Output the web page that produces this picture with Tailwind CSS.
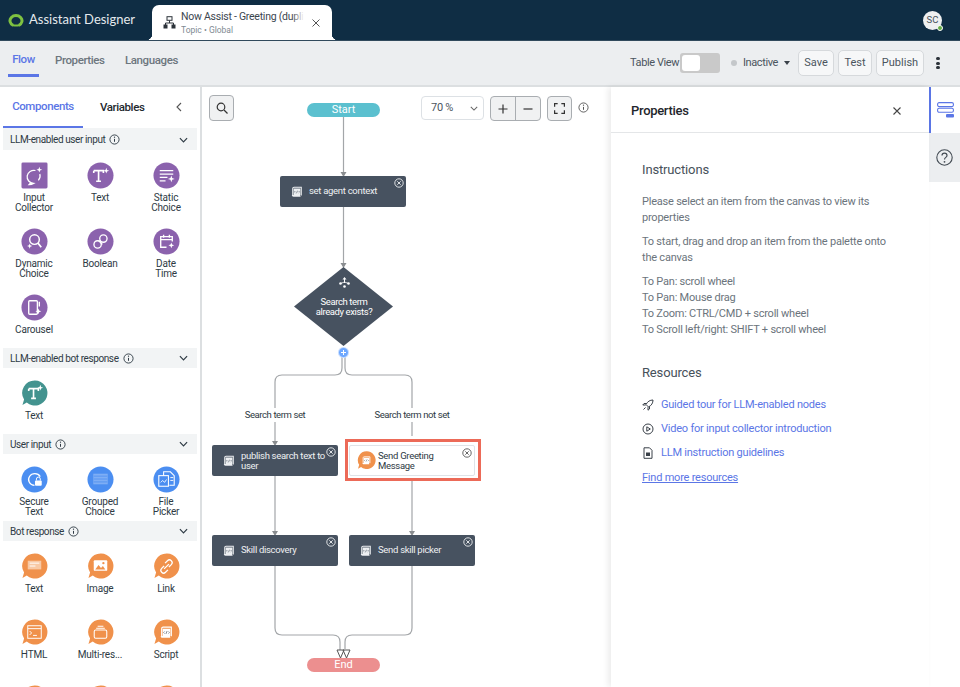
<!DOCTYPE html>
<html lang="en">
<head>
    <meta charset="UTF-8">
    <title>Assistant Designer</title>
    <script src="https://cdn.jsdelivr.net/npm/@tailwindcss/browser@4"></script>
</head>
<body class="w-[960px] h-[687px] overflow-hidden bg-white text-[#2e3a44] [font-family:Roboto,sans-serif]">
    <!-- shared icons -->
    <svg class="hidden">
        <symbol id="script-glyph" viewBox="0 0 14 14">
            <path d="M3.500 1.500h8.500v9.500M3.500 1.500c-1 0-1.500.7-1.500 1.500v7.500" fill="none" stroke="currentColor" stroke-width="1.200"/>
            <path d="M3 3h8v8H3zM1 10.500h9.500c0 1.400.6 2 1.200 2H3c-1.200 0-2-.8-2-2z" fill="currentColor"/>
            <path d="M5 6 4 7l1 1M9 6l1 1-1 1M7.600 5.500 6.400 8.500" fill="none" stroke="#475260" stroke-width=".7"/>
        </symbol>
        <symbol id="bubble" viewBox="0 0 28 28">
            <path d="M14.500.5a13 13 0 1 1-8.500 22.900L1.500 26l1.700-5.700A13 13 0 0 1 14.500.5z" fill="currentColor"/>
        </symbol>
        <symbol id="close-circle" viewBox="0 0 10 10">
            <circle cx="5" cy="5" r="4.200" fill="none" stroke="currentColor" stroke-width=".9"/>
            <path d="M3.300 3.300l3.400 3.400M6.700 3.300 3.300 6.700" stroke="currentColor" stroke-width=".9"/>
        </symbol>
        <symbol id="info" viewBox="0 0 12 12">
            <circle cx="6" cy="6" r="5" fill="none" stroke="currentColor" stroke-width="1"/>
            <path d="M6 5.300v3.200" stroke="currentColor" stroke-width="1.100"/>
            <circle cx="6" cy="3.500" r=".7" fill="currentColor"/>
        </symbol>
        <symbol id="chevron" viewBox="0 0 10 6">
            <path d="M1 1l4 4 4-4" fill="none" stroke="currentColor" stroke-width="1.300"/>
        </symbol>
    </svg>

    <!-- top header -->
    <header class="h-[41px] bg-[#0f2d44] flex items-end relative border-b border-[#31495c]">
        <div class="flex items-center h-[40px] pl-[8px] w-[152px] self-start">
            <svg class="w-[16px] h-[13px]" viewBox="0 0 16 13"><path d="M5.200 11.300a6 5.200 0 1 1 5.600 0" fill="none" stroke="#7fc241" stroke-width="3"/><path d="M5 11.300q3 .6 6 0" fill="none" stroke="#7fc241" stroke-width="2"/></svg>
            <span class="ml-[5px] text-[13px] text-[#e4e9ed] whitespace-nowrap [font-family:Lato,sans-serif]">Assistant Designer</span>
        </div>
        <div class="relative w-[180px] h-[35px] bg-white rounded-t-[7px] flex items-center pl-[11px]">
            <div class="absolute left-[-6px] bottom-0 w-[6px] h-[6px] bg-[radial-gradient(circle_at_0_0,transparent_6px,white_6.500px)]"></div>
            <div class="absolute right-[-6px] bottom-0 w-[6px] h-[6px] bg-[radial-gradient(circle_at_100%_0,transparent_6px,white_6.500px)]"></div>
            <svg class="w-[13px] h-[13px] text-[#2c333a]" viewBox="0 0 13 13"><rect x="4" y=".7" width="5" height="3.600" fill="none" stroke="currentColor"/><path d="M6.500 4.500v2.500M2.500 9V7h8v2" fill="none" stroke="currentColor"/><rect x=".5" y="8.500" width="4" height="4" fill="currentColor"/><rect x="8.500" y="8.500" width="4" height="4" fill="currentColor"/></svg>
            <div class="relative ml-[5px] w-[123px] h-[25px] overflow-hidden">
                <div class="text-[10.500px] leading-[14px] tracking-[-0.25px] text-[#3c464f] whitespace-nowrap">Now Assist - Greeting (dupli</div>
                <div class="text-[8.500px] leading-[10px] mt-[1px] text-[#808a93] whitespace-nowrap">Topic • Global</div>
                <div class="absolute right-0 top-0 w-[12px] h-[13px] bg-gradient-to-r from-transparent to-white"></div>
            </div>
            <svg class="ml-[8px] w-[8px] h-[8px] text-[#555]" viewBox="0 0 8 8"><path d="M.5.500l7 7M7.500.500l-7 7" stroke="currentColor"/></svg>
        </div>
        <div class="relative ml-auto mr-[18px] self-center w-[19px] h-[19px] rounded-full bg-[#eef0f1] flex items-center justify-center text-[9.500px] text-[#47525c]">
            SC
            <span class="absolute right-[-1px] bottom-[-1px] w-[6px] h-[6px] rounded-full bg-[#62ad45] border border-white"></span>
        </div>
    </header>

    <!-- toolbar -->
    <div class="h-[46px] bg-[#eceef0] border-b-2 border-[#dcdfe1] flex items-center relative">
        <nav class="flex h-full pl-[8px] text-[11.500px] tracking-[-0.4px] font-medium text-[#6c767e]">
            <div class="w-[31px] flex items-center justify-center text-[#5b76e6] border-b-[3px] border-[#5b76e6] h-[36px] pt-[4px]">Flow</div>
            <div class="ml-[16px] w-[50px] h-[36px] flex items-center pt-[4px]">Properties</div>
            <div class="ml-[20px] h-[36px] flex items-center pt-[4px]">Languages</div>
        </nav>
        <div class="ml-auto flex items-center text-[11px] text-[#4b555e] whitespace-nowrap">
            <span class="w-[46px] pt-[1px] tracking-[-0.4px]">Table View</span>
            <div class="ml-[4px] w-[40px] h-[20px] rounded-[3px] bg-[#c9c9c9] p-[2px]"><div class="w-[18px] h-[16px] bg-white rounded-[3px]"></div></div>
            <span class="ml-[11px] w-[6px] h-[6px] rounded-full bg-[#c4c7ca]"></span>
            <span class="ml-[6px] w-[34px] pt-[1px] tracking-[-0.4px]">Inactive</span>
            <span class="ml-[7px] w-0 h-0 border-x-[3.500px] border-x-transparent border-t-[4px] border-t-[#3a4149]"></span>
            <button class="ml-[8px] w-[36px] h-[26px] pt-[1px] bg-[#f6f7f8] border border-[#d6d9dc] rounded-[5px]">Save</button>
            <button class="ml-[4px] w-[34px] h-[26px] pt-[1px] bg-[#f6f7f8] border border-[#d6d9dc] rounded-[5px]">Test</button>
            <button class="ml-[4px] w-[48px] h-[26px] pt-[1px] bg-[#f6f7f8] border border-[#d6d9dc] rounded-[5px]">Publish</button>
            <div class="ml-[12px] mr-[20px] flex flex-col gap-[1.500px]">
                <span class="w-[4px] h-[3px] rounded-full bg-[#2c333a]"></span>
                <span class="w-[4px] h-[3px] rounded-full bg-[#2c333a]"></span>
                <span class="w-[4px] h-[3px] rounded-full bg-[#2c333a]"></span>
            </div>
        </div>
    </div>

    <main class="flex h-[600px]">
        <!-- component palette -->
        <aside class="w-[202px] shrink-0 border-r-2 border-[#dcdfe1] overflow-hidden">
            <div class="h-[41px] flex items-center relative text-[11.500px] font-medium tracking-[-0.4px]">
                <div class="ml-[3px] w-[80px] h-full flex items-center justify-center text-[#5b76e6] border-b-[2px] border-[#5b76e6] pt-[1px]">Components</div>
                <div class="ml-[17px] text-[#23292f]">Variables</div>
                <svg class="absolute left-[176px] top-[15px] w-[6px] h-[10px] text-[#555]" viewBox="0 0 6 10"><path d="M5 1 1 5l4 4" fill="none" stroke="currentColor" stroke-width="1.100"/></svg>
            </div>

            <div class="mx-[3px] h-[22px] pt-[1px] bg-[#f2f4f5] flex items-center pl-[7px] pr-[9px] text-[10px] tracking-[-0.4px]">
                LLM-enabled user input
                <svg class="ml-[4px] w-[11px] h-[11px]"><use href="#info"/></svg>
                <svg class="ml-auto w-[9px] h-[6px]"><use href="#chevron"/></svg>
            </div>
            <div class="h-[198px] pt-[12px] px-[1px] grid grid-cols-[repeat(3,66px)] auto-rows-[55px] gap-y-[11px] text-[10px] tracking-[-0.2px] leading-[10px] text-center">
                <div class="flex flex-col items-center">
                    <svg class="w-[27px] h-[27px]" viewBox="0 0 28 28"><rect x=".5" y=".5" width="27" height="27" rx="1.500" fill="#8b62ad"/><path d="M15 8.800a7 6.800 0 1 0-2 13.400c-1.200.7-3 1.200-4.500 1.200.8-.8 1.200-1.700 1.300-2.600M19.500 12.500a7 6.800 0 0 1-1.500 6.500" fill="none" stroke="#fff" stroke-width="1.300"/><path d="M19 5l.8 2.200L22 8l-2.200.8L19 11l-.8-2.200L16 8l2.200-.8z" fill="#fff"/></svg>
                    <span class="mt-[4px]">Input<br>Collector</span>
                </div>
                <div class="flex flex-col items-center">
                    <svg class="w-[27px] h-[27px]" viewBox="0 0 28 28"><circle cx="14" cy="14" r="13.500" fill="#8b62ad"/><path d="M7 9h10v2.500M7 11.500V9M12 9v11M9.500 20h5" fill="none" stroke="#fff" stroke-width="1.700"/><path d="M20 6l.8 2.200L23 9l-2.200.8L20 12l-.8-2.200L17 9l2.200-.8z" fill="#fff"/></svg>
                    <span class="mt-[4px]">Text</span>
                </div>
                <div class="flex flex-col items-center">
                    <svg class="w-[27px] h-[27px]" viewBox="0 0 28 28"><circle cx="14" cy="14" r="13.500" fill="#8b62ad"/><path d="M7 9h14M7 12.500h14M7 16h8M7 19.500h6" stroke="#fff" stroke-width="1.200" fill="none"/><path d="M19 14l.9 2.600 2.600.9-2.600.9-.9 2.600-.9-2.600-2.600-.9 2.600-.9z" fill="#fff"/></svg>
                    <span class="mt-[4px]">Static<br>Choice</span>
                </div>
                <div class="flex flex-col items-center">
                    <svg class="w-[27px] h-[27px]" viewBox="0 0 28 28"><circle cx="14" cy="14" r="13.500" fill="#8b62ad"/><circle cx="14" cy="12" r="5" fill="none" stroke="#fff" stroke-width="1.500"/><path d="M17.500 15.500 21 20" stroke="#fff" stroke-width="1.800"/><path d="M9 16l.7 2 2 .7-2 .7-.7 2-.7-2-2-.7 2-.7z" fill="#fff"/></svg>
                    <span class="mt-[4px]">Dynamic<br>Choice</span>
                </div>
                <div class="flex flex-col items-center">
                    <svg class="w-[27px] h-[27px]" viewBox="0 0 28 28"><circle cx="14" cy="14" r="13.500" fill="#8b62ad"/><circle cx="11" cy="17" r="3.800" fill="none" stroke="#fff" stroke-width="1.400"/><circle cx="17" cy="11" r="3.800" fill="none" stroke="#fff" stroke-width="1.400"/><path d="M12 13l4 4" stroke="#fff" stroke-width="1.400"/></svg>
                    <span class="mt-[4px]">Boolean</span>
                </div>
                <div class="flex flex-col items-center">
                    <svg class="w-[27px] h-[27px]" viewBox="0 0 28 28"><circle cx="14" cy="14" r="13.500" fill="#8b62ad"/><path d="M14 20H8V9h12v5M8 12h12M11 7v3M17 7v3" fill="none" stroke="#fff" stroke-width="1.400"/><path d="M19 15l.8 2.200 2.200.8-2.200.8-.8 2.200-.8-2.200-2.200-.8 2.200-.8z" fill="#fff"/></svg>
                    <span class="mt-[4px]">Date<br>Time</span>
                </div>
                <div class="flex flex-col items-center">
                    <svg class="w-[27px] h-[27px]" viewBox="0 0 28 28"><circle cx="14" cy="14" r="13.500" fill="#8b62ad"/><rect x="8" y="7" width="9" height="14" rx="1" fill="none" stroke="#fff" stroke-width="1.400"/><path d="M19 8v5" stroke="#fff" stroke-width="1.400"/><path d="M18 15l.8 2.200 2.200.8-2.200.8-.8 2.200-.8-2.200-2.200-.8 2.200-.8z" fill="#fff"/></svg>
                    <span class="mt-[4px]">Carousel</span>
                </div>
            </div>

            <div class="mx-[3px] h-[20px] bg-[#f2f4f5] flex items-center pl-[7px] pr-[9px] text-[10px] tracking-[-0.4px]">
                LLM-enabled bot response
                <svg class="ml-[4px] w-[11px] h-[11px]"><use href="#info"/></svg>
                <svg class="ml-auto w-[9px] h-[6px]"><use href="#chevron"/></svg>
            </div>
            <div class="h-[66px] pt-[12px] px-[1px] grid grid-cols-[repeat(3,66px)] auto-rows-[54px] text-[10px] tracking-[-0.2px] leading-[10px] text-center">
                <div class="flex flex-col items-center">
                    <svg class="w-[27px] h-[27px]" viewBox="0 0 28 28"><use href="#bubble" width="28" height="28" class="text-[#43938f]"/><path d="M8 9h10v2.500M8 11.500V9M13 9v10M10.500 19h5" fill="none" stroke="#fff" stroke-width="1.700"/><path d="M20 5l.8 2.200L23 8l-2.200.8L20 11l-.8-2.200L17 8l2.200-.8z" fill="#fff"/></svg>
                    <span class="mt-[4px]">Text</span>
                </div>
            </div>

            <div class="mx-[3px] h-[20px] bg-[#f2f4f5] flex items-center pl-[7px] pr-[9px] text-[10px] tracking-[-0.4px]">
                User input
                <svg class="ml-[4px] w-[11px] h-[11px]"><use href="#info"/></svg>
                <svg class="ml-auto w-[9px] h-[6px]"><use href="#chevron"/></svg>
            </div>
            <div class="h-[67px] pt-[12px] px-[1px] grid grid-cols-[repeat(3,66px)] auto-rows-[55px] text-[10px] tracking-[-0.2px] leading-[10px] text-center">
                <div class="flex flex-col items-center">
                    <svg class="w-[27px] h-[27px]" viewBox="0 0 28 28"><circle cx="14" cy="14" r="13.500" fill="#4b8ef1"/><path d="M14 20a6.500 6 0 1 1 6-9" fill="none" stroke="#fff" stroke-width="1.300"/><rect x="14.500" y="15" width="7" height="5.500" rx="1" fill="#fff"/><path d="M16 15v-1.500a2 2 0 0 1 4 0V15" fill="none" stroke="#fff"/></svg>
                    <span class="mt-[4px]">Secure<br>Text</span>
                </div>
                <div class="flex flex-col items-center">
                    <svg class="w-[27px] h-[27px]" viewBox="0 0 28 28"><circle cx="14" cy="14" r="13.500" fill="#4b8ef1"/><rect x="6.500" y="8" width="15" height="11" fill="#7eaef5"/><path d="M7 10.500h14M7 13.500h14M7 16.500h14" stroke="#4b8ef1" stroke-width=".8"/></svg>
                    <span class="mt-[4px]">Grouped<br>Choice</span>
                </div>
                <div class="flex flex-col items-center">
                    <svg class="w-[27px] h-[27px]" viewBox="0 0 28 28"><circle cx="14" cy="14" r="13.500" fill="#4b8ef1"/><path d="M11 10V6h7l4 4v10h-5" fill="none" stroke="#fff" stroke-width="1.100"/><rect x="6" y="10" width="10" height="11" fill="none" stroke="#fff" stroke-width="1.100"/><path d="M8 17l2-2 2 2 2-3M18 12h3M18 15h3" stroke="#fff" stroke-width=".9" fill="none"/></svg>
                    <span class="mt-[4px]">File<br>Picker</span>
                </div>
            </div>

            <div class="mx-[3px] h-[20px] bg-[#f2f4f5] flex items-center pl-[7px] pr-[9px] text-[10px] tracking-[-0.4px]">
                Bot response
                <svg class="ml-[4px] w-[11px] h-[11px]"><use href="#info"/></svg>
                <svg class="ml-auto w-[9px] h-[6px]"><use href="#chevron"/></svg>
            </div>
            <div class="pt-[12px] px-[1px] grid grid-cols-[repeat(3,66px)] auto-rows-[55px] gap-y-[11px] text-[10px] tracking-[-0.2px] leading-[10px] text-center">
                <div class="flex flex-col items-center">
                    <svg class="w-[27px] h-[27px]" viewBox="0 0 28 28"><use href="#bubble" width="28" height="28" class="text-[#f0914b]"/><rect x="7" y="8" width="14" height="9" fill="#f8c9a5"/><path d="M9 10.500h10M9 13.500h6" stroke="#fff"/></svg>
                    <span class="mt-[4px]">Text</span>
                </div>
                <div class="flex flex-col items-center">
                    <svg class="w-[27px] h-[27px]" viewBox="0 0 28 28"><use href="#bubble" width="28" height="28" class="text-[#f0914b]"/><rect x="7" y="7.500" width="14" height="11" rx="1" fill="#fff"/><path d="M8.500 17l3.500-4.500 2.500 3 2-2 2.500 3.500z" fill="#f0914b"/><circle cx="17" cy="10.500" r="1.200" fill="#f0914b"/></svg>
                    <span class="mt-[4px]">Image</span>
                </div>
                <div class="flex flex-col items-center">
                    <svg class="w-[27px] h-[27px]" viewBox="0 0 28 28"><use href="#bubble" width="28" height="28" class="text-[#f0914b]"/><path d="M11.500 13.500l-2.500 2.500a2.800 2.800 0 0 0 4 4l2.500-2.500M16.500 14.500l2.500-2.500a2.800 2.800 0 0 0-4-4l-2.500 2.500M11.500 16.500l5-5" fill="none" stroke="#fff" stroke-width="1.300"/></svg>
                    <span class="mt-[4px]">Link</span>
                </div>
                <div class="flex flex-col items-center">
                    <svg class="w-[27px] h-[27px]" viewBox="0 0 28 28"><use href="#bubble" width="28" height="28" class="text-[#f0914b]"/><rect x="7" y="7" width="14" height="13" fill="none" stroke="#fff"/><path d="M7 10h14" stroke="#fff"/><path d="M9 12.500l2 2-2 2M12.500 17h4" fill="none" stroke="#fff"/></svg>
                    <span class="mt-[4px]">HTML</span>
                </div>
                <div class="flex flex-col items-center">
                    <svg class="w-[27px] h-[27px]" viewBox="0 0 28 28"><use href="#bubble" width="28" height="28" class="text-[#f0914b]"/><rect x="7.500" y="11.500" width="13" height="8.500" rx="1.500" fill="none" stroke="#fff" stroke-width="1.100"/><path d="M9.500 9.500h9M11 7.500h6" stroke="#fff" stroke-width="1.100"/></svg>
                    <span class="mt-[4px]">Multi-res...</span>
                </div>
                <div class="flex flex-col items-center">
                    <svg class="w-[27px] h-[27px]" viewBox="0 0 28 28"><use href="#bubble" width="28" height="28" class="text-[#f0914b]"/><svg x="7" y="7" width="14" height="14" class="text-white"><use href="#script-glyph"/></svg></svg>
                    <span class="mt-[4px]">Script</span>
                </div>
                <svg class="w-[27px] h-[27px] mx-auto text-[#f0914b]"><use href="#bubble"/></svg>
                <svg class="w-[27px] h-[27px] mx-auto text-[#f0914b]"><use href="#bubble"/></svg>
                <svg class="w-[27px] h-[27px] mx-auto text-[#f0914b]"><use href="#bubble"/></svg>
            </div>
        </aside>

        <!-- flow canvas -->
        <section class="relative w-[409px] shrink-0 overflow-hidden text-[9.500px] tracking-[-0.3px]">
            <svg class="absolute inset-0 w-[409px] h-[600px]" viewBox="202 87 409 600" fill="none" stroke="#a3a6a9" stroke-width="1.200">
                <path d="M343.500 117V172M343.500 207V263"/>
                <path d="M342 356v12q0 7-7 7h-53q-7 0-7 7v60M345 356v12q0 7 7 7h53q7 0 7 7v54"/>
                <path d="M275 476v55M412 481v50"/>
                <path d="M275 566v62q0 7 7 7h51q7 0 7 7v8M412 566v62q0 7-7 7h-53q-7 0-7 7v7"/>
                <path d="M340.500 172h6l-3 5zM272 441h6l-3 5zM409 531h6l-3 5zM272 531h6l-3 5zM340.500 263h6l-3 5z" fill="#8a8d90" stroke="none"/>
                <path d="M337 650h7l-3.500 8zM343 650h7l-3.500 8z" stroke="#555" stroke-width="1" fill="#fff"/>
                <path d="M343.500 267 393 306.500 343.500 346 294 306.500z" fill="#475260" stroke="none"/>
            </svg>

            <button class="absolute left-[7px] top-[8px] w-[25px] h-[26px] bg-[#f0f1f2] border border-[#a9adb1] rounded-[4px] flex items-center justify-center">
                <svg class="w-[12px] h-[12px] text-[#333]" viewBox="0 0 12 12"><circle cx="5" cy="5" r="3.800" fill="none" stroke="currentColor" stroke-width="1.200"/><path d="M8 8l3.500 3.500" stroke="currentColor" stroke-width="1.300"/></svg>
            </button>
            <div class="absolute left-[219px] top-[9px] w-[63px] h-[24px] bg-white border border-[#dde1e5] rounded-[4px] flex items-center pl-[9px] pr-[2px] text-[11px] text-[#4b555e]">
                70 %
                <svg class="ml-auto mr-[3px] w-[8px] h-[5px] text-[#666]"><use href="#chevron"/></svg>
            </div>
            <div class="absolute left-[288px] top-[9px] w-[51px] h-[25px] bg-[#f0f1f2] border border-[#a9adb1] rounded-[4px] flex divide-x divide-[#a9adb1] text-[#333]">
                <div class="flex-1 flex items-center justify-center"><svg class="w-[10px] h-[10px]" viewBox="0 0 10 10"><path d="M5 .5v9M.5 5h9" stroke="currentColor" stroke-width="1.200"/></svg></div>
                <div class="flex-1 flex items-center justify-center"><svg class="w-[10px] h-[10px]" viewBox="0 0 10 10"><path d="M.5 5h9" stroke="currentColor" stroke-width="1.200"/></svg></div>
            </div>
            <button class="absolute left-[345px] top-[9px] w-[25px] h-[25px] bg-[#f0f1f2] border border-[#a9adb1] rounded-[4px] flex items-center justify-center">
                <svg class="w-[11px] h-[11px] text-[#333]" viewBox="0 0 9 9"><path d="M.5 3V.5H3M6 .5h2.500V3M8.500 6v2.500H6M3 8.500H.5V6" fill="none" stroke="currentColor"/></svg>
            </button>
            <svg class="absolute left-[376px] top-[15px] w-[11px] h-[11px] text-[#555]"><use href="#info"/></svg>

            <div class="absolute left-[105px] top-[16px] w-[73px] h-[14px] rounded-full bg-[#5bc0cf] text-white text-[11px] tracking-normal flex items-center justify-center">Start</div>

            <div class="absolute left-[78px] top-[89px] w-[126px] h-[31px] bg-[#475260] rounded-[2px] text-[#eef0f2] flex items-center pl-[11px]">
                <svg class="w-[12px] h-[12px] mr-[6px] shrink-0"><use href="#script-glyph"/></svg>set agent context
                <svg class="absolute right-[2px] top-[2px] w-[10px] h-[10px]"><use href="#close-circle"/></svg>
            </div>

            <div class="absolute left-[92px] top-[190px] w-[100px] h-[60px] text-white leading-[10px] tracking-[-0.4px] text-center flex flex-col items-center">
                <svg class="w-[11px] h-[11px] mb-[9px]" viewBox="0 0 11 11" fill="#fff"><path d="M5.500 0 7.500 2.500h-4zM5 2.500h1V6H5z"/><circle cx="1.500" cy="6.500" r="1.300"/><circle cx="9.500" cy="6.500" r="1.300"/><circle cx="5.500" cy="9.500" r="1.300"/><path d="M1.500 6.500l4-1.500 4 1.500" fill="none" stroke="#fff" stroke-width=".8"/></svg>
                <span>Search term<br>already exists?</span>
            </div>

            <div class="absolute left-[136px] top-[260px] w-[11px] h-[11px] rounded-full bg-[#6ea8ff] border border-white/60 flex items-center justify-center">
                <svg class="w-[5px] h-[5px]" viewBox="0 0 5 5"><path d="M2.500 0v5M0 2.500h5" stroke="#fff"/></svg>
            </div>

            <div class="absolute left-[38px] top-[321px] w-[70px] bg-white text-center tracking-[-0.4px] text-[#2e3a44] whitespace-nowrap">Search term set</div>
            <div class="absolute left-[165px] top-[321px] w-[90px] bg-white text-center tracking-[-0.4px] text-[#2e3a44] whitespace-nowrap">Search term not set</div>

            <div class="absolute left-[10px] top-[358px] w-[126px] h-[31px] bg-[#475260] rounded-[2px] text-[#eef0f2] flex items-center pl-[11px] leading-[10px] whitespace-nowrap">
                <svg class="w-[12px] h-[12px] mr-[6px] shrink-0"><use href="#script-glyph"/></svg><span>publish search text to<br>user</span>
                <svg class="absolute right-[2px] top-[2px] w-[10px] h-[10px]"><use href="#close-circle"/></svg>
            </div>

            <div class="absolute left-[143px] top-[352px] w-[136px] h-[42px] border-[3px] border-[#ec6a58] bg-white pt-[3px] pl-[1px]">
                <div class="relative h-[31px] w-[126px] bg-white border border-[#dfe3e8] rounded-[2px] flex items-center pl-[7px] text-[#2e3a44] leading-[10px]">
                    <svg class="w-[19px] h-[19px] mr-[2px] shrink-0" viewBox="0 0 28 28"><use href="#bubble" width="28" height="28" class="text-[#f0914b]"/><svg x="7" y="7" width="14" height="14" class="text-white"><use href="#script-glyph"/></svg></svg>
                    <span>Send Greeting<br>Message</span>
                    <svg class="absolute right-[2px] top-[2px] w-[10px] h-[10px] text-[#555]"><use href="#close-circle"/></svg>
                </div>
            </div>

            <div class="absolute left-[10px] top-[448px] w-[126px] h-[31px] bg-[#475260] rounded-[2px] text-[#eef0f2] flex items-center pl-[11px]">
                <svg class="w-[12px] h-[12px] mr-[6px] shrink-0"><use href="#script-glyph"/></svg>Skill discovery
                <svg class="absolute right-[2px] top-[2px] w-[10px] h-[10px]"><use href="#close-circle"/></svg>
            </div>
            <div class="absolute left-[147px] top-[448px] w-[126px] h-[31px] bg-[#475260] rounded-[2px] text-[#eef0f2] flex items-center pl-[11px]">
                <svg class="w-[12px] h-[12px] mr-[6px] shrink-0"><use href="#script-glyph"/></svg>Send skill picker
                <svg class="absolute right-[2px] top-[2px] w-[10px] h-[10px]"><use href="#close-circle"/></svg>
            </div>

            <div class="absolute left-[105px] top-[571px] w-[73px] h-[14px] rounded-full bg-[#ec8f8f] text-white text-[11px] tracking-normal flex items-center justify-center">End</div>
        </section>

        <!-- properties panel -->
        <section class="w-[318px] shrink-0 shadow-[-3px_0_6px_rgba(0,0,0,.08)] relative">
            <div class="h-[46px] border-b border-[#e4e6e8] flex items-center pl-[20px] pr-[28px] pt-[3px]">
                <h2 class="text-[13px] font-medium tracking-[-0.3px] text-[#1f262c]">Properties</h2>
                <svg class="ml-auto w-[8px] h-[8px] text-[#444]" viewBox="0 0 8 8"><path d="M.5.500l7 7M7.500.500l-7 7" stroke="currentColor" stroke-width="1.100"/></svg>
            </div>
            <div class="pl-[31px] pr-[30px] pt-[28px] text-[#6b747c] text-[11px] tracking-[-0.22px] leading-[16px] whitespace-nowrap">
                <h3 class="text-[13px] leading-[18px] tracking-[-0.15px] text-[#47515a]">Instructions</h3>
                <p class="mt-[15px]">Please select an item from the canvas to view its<br>properties</p>
                <p class="mt-[8px]">To start, drag and drop an item from the palette onto<br>the canvas</p>
                <p class="mt-[8px]">To Pan: scroll wheel<br>To Pan: Mouse drag<br>To Zoom: CTRL/CMD + scroll wheel<br>To Scroll left/right: SHIFT + scroll wheel</p>
                <h3 class="mt-[26px] text-[13px] leading-[18px] tracking-[-0.15px] text-[#47515a]">Resources</h3>
                <div class="mt-[15px] flex flex-col gap-[8px] text-[#5b76e6]">
                    <div class="flex items-center">
                        <svg class="w-[12px] h-[12px] mr-[7px] text-[#3a4149]" viewBox="0 0 12 12"><path d="M11 1C8 1 5.500 2.500 4 5.500L6.500 8C9.500 6.500 11 4 11 1zM4.500 4.500H2L.8 6h3M7.500 7.500V10L6 11.200v-3M3.500 8.500 1.500 10.500" fill="none" stroke="currentColor"/></svg>
                        <a>Guided tour for LLM-enabled nodes</a>
                    </div>
                    <div class="flex items-center">
                        <svg class="w-[12px] h-[12px] mr-[7px] text-[#3a4149]" viewBox="0 0 12 12"><circle cx="6" cy="6" r="5" fill="none" stroke="currentColor"/><path d="M4.800 3.800v4.400L8.300 6z" fill="none" stroke="currentColor"/></svg>
                        <a>Video for input collector introduction</a>
                    </div>
                    <div class="flex items-center">
                        <svg class="w-[12px] h-[12px] mr-[7px] text-[#3a4149]" viewBox="0 0 12 12"><path d="M2 .8h5.500L10 3.300v8H2z" fill="none" stroke="currentColor"/><rect x="4" y="5.500" width="4" height="3.500" fill="currentColor"/></svg>
                        <a>LLM instruction guidelines</a>
                    </div>
                </div>
                <a class="block mt-[9px] text-[#5b76e6] underline">Find more resources</a>
            </div>
        </section>

        <!-- right rail -->
        <aside class="flex-1">
            <div class="h-[46px] border-l-2 border-[#5b76e6] flex items-center justify-center">
                <svg class="w-[17px] h-[16px] text-[#5b76e6]" viewBox="0 0 17 16"><rect x=".6" y=".6" width="15.800" height="4" rx="1.500" fill="none" stroke="currentColor" stroke-width="1.100"/><rect x=".6" y="6.200" width="15.800" height="4" rx="1.500" fill="none" stroke="currentColor" stroke-width="1.100"/><rect x="9" y="12" width="8" height="3.500" rx="1" fill="currentColor"/></svg>
            </div>
            <div class="h-[49px] bg-[#eceef0] flex items-center justify-center">
                <svg class="w-[17px] h-[17px] text-[#444c54]" viewBox="0 0 17 17"><circle cx="8.500" cy="8.500" r="7.700" fill="none" stroke="currentColor" stroke-width="1.100"/><path d="M6 6.500c0-3.200 5-3.200 5 0 0 2-2.500 1.800-2.500 4" fill="none" stroke="currentColor" stroke-width="1.200"/><circle cx="8.500" cy="12.800" r=".9" fill="currentColor"/></svg>
            </div>
        </aside>
    </main>
</body>
</html>
